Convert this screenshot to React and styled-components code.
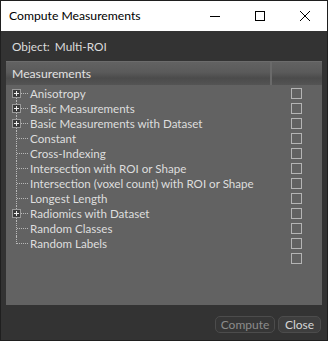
import React from 'react';
import styled, { createGlobalStyle } from 'styled-components';

const GlobalStyle = createGlobalStyle`
  html, body {
    margin: 0;
    padding: 0;
    background: #333333;
  }
  #root {
    width: 328px;
    height: 341px;
  }
`;

const Window = styled.div`
  box-sizing: border-box;
  width: 328px;
  height: 341px;
  border: 1px solid #1f1f1f;
  border-top: none;
  background: #333333;
  display: flex;
  flex-direction: column;
  font-family: Lato, "Open Sans", sans-serif;
`;

const TitleBar = styled.div`
  height: 31px;
  flex: none;
  background: #ffffff;
  display: flex;
  align-items: center;
  border-top: 1px solid #1f1f1f;
  box-sizing: border-box;
`;

const Title = styled.div`
  flex: 1;
  padding-left: 8px;
  font-size: 12.2px;
  color: #000;
  margin-top: -1px;
`;

const Control = styled.div`
  width: 45px;
  height: 30px;
  display: flex;
  align-items: center;
  justify-content: center;
`;

const Body = styled.div`
  flex: 1;
  display: flex;
  flex-direction: column;
  padding: 0 5px 0 5px;
`;

const ObjectRow = styled.div`
  height: 30px;
  display: flex;
  align-items: center;
  gap: 5px;
  padding-left: 6px;
  font-size: 11.8px;
  color: #dcdcdc;
`;

const Panel = styled.div`
  height: 244px;
  background: #626262;
  display: flex;
  flex-direction: column;
`;

const Header = styled.div`
  height: 24px;
  display: flex;
  flex: none;
  background: linear-gradient(#626262 0%, #5a5a5a 45%, #4b4b4b 70%, #545454 100%);
  border-top: 1px solid #6c6c6c;
  box-sizing: border-box;
`;

const HeaderCell = styled.div`
  display: flex;
  align-items: center;
  font-size: 12.2px;
  color: #e2e2e2;
  box-sizing: border-box;
  ${p => p.$grow ? 'flex: 1; padding-left: 6px;' : 'width: 52px; flex: none;'}
  ${p => p.$divider ? 'border-left: 2px solid #6a6a6a;' : ''}
`;

const Rows = styled.div`
  padding-top: 1px;
  display: flex;
  flex-direction: column;
`;

const Row = styled.div`
  height: 15px;
  display: flex;
  align-items: center;
`;

const NameCell = styled.div`
  flex: 1;
  min-width: 0;
  display: flex;
  align-items: center;
  height: 100%;
  font-size: 11.6px;
  line-height: 14px;
  color: #dedede;
  white-space: nowrap;
`;

const Connector = styled.div`
  position: relative;
  width: 24px;
  height: 100%;
  flex: none;

  &::before {
    content: '';
    position: absolute;
    left: 10px;
    top: ${p => (p.$first ? '8px' : '0')};
    bottom: ${p => (p.$last ? '7px' : '0')};
    border-left: 1px dotted #b8b8b8;
  }

  &::after {
    content: '';
    position: absolute;
    left: 11px;
    width: 11px;
    top: 7px;
    border-top: 1px dotted #b8b8b8;
  }
`;

const Expander = styled.div`
  position: absolute;
  left: 6px;
  top: 3px;
  width: 9px;
  height: 9px;
  box-sizing: border-box;
  border: 1px solid #9a9a9a;
  background: #3a3a3a;
  z-index: 1;

  &::before {
    content: '';
    position: absolute;
    left: 1px;
    top: 3px;
    width: 5px;
    height: 1px;
    background: #f0f0f0;
  }

  &::after {
    content: '';
    position: absolute;
    left: 3px;
    top: 1px;
    width: 1px;
    height: 5px;
    background: #f0f0f0;
  }
`;

const CheckCell = styled.div`
  width: 52px;
  flex: none;
  display: flex;
  justify-content: center;
  padding-left: 1px;
  box-sizing: border-box;
`;

const Check = styled.div`
  width: 11px;
  height: 11px;
  box-sizing: border-box;
  border: 1px solid #b4b4b4;
`;

const Footer = styled.div`
  flex: 1;
  display: flex;
  justify-content: flex-end;
  align-items: flex-start;
  gap: 3px;
  padding-top: 11px;
  padding-right: 1px;
`;

const Button = styled.button`
  height: 17px;
  padding: 0;
  width: ${p => p.$w}px;
  border: 1px solid #4c4c4c;
  border-radius: 5px;
  background: ${p => (p.$disabled ? '#363636' : '#3e3e3e')};
  color: ${p => (p.$disabled ? '#8c8c8c' : '#d6d6d6')};
  font-family: Lato, "Open Sans", sans-serif;
  font-size: 12px;
  line-height: 15px;
`;

const items = [
  { name: 'Anisotropy', exp: true },
  { name: 'Basic Measurements', exp: true },
  { name: 'Basic Measurements with Dataset', exp: true },
  { name: 'Constant' },
  { name: 'Cross-Indexing' },
  { name: 'Intersection with ROI or Shape' },
  { name: 'Intersection (voxel count) with ROI or Shape' },
  { name: 'Longest Length' },
  { name: 'Radiomics with Dataset', exp: true },
  { name: 'Random Classes' },
  { name: 'Random Labels' },
];

export default function App() {
  return (
    <>
      <GlobalStyle />
      <Window>
        <TitleBar>
          <Title>Compute Measurements</Title>
          <Control>
            <svg width="10" height="10" viewBox="0 0 10 10">
              <path d="M0 5.5h10" stroke="#000" strokeWidth="1" />
            </svg>
          </Control>
          <Control>
            <svg width="10" height="10" viewBox="0 0 10 10">
              <rect x="0.5" y="0.5" width="9" height="9" fill="none" stroke="#000" strokeWidth="1" />
            </svg>
          </Control>
          <Control>
            <svg width="10" height="10" viewBox="0 0 10 10">
              <path d="M0 0L10 10M10 0L0 10" stroke="#000" strokeWidth="1" />
            </svg>
          </Control>
        </TitleBar>
        <Body>
          <ObjectRow>
            <span>Object:</span>
            <span>Multi-ROI</span>
          </ObjectRow>
          <Panel>
            <Header>
              <HeaderCell $grow>Measurements</HeaderCell>
              <HeaderCell $divider />
            </Header>
            <Rows>
              {items.map((it, i) => (
                <Row key={it.name}>
                  <NameCell>
                    <Connector $first={i === 0} $last={i === items.length - 1}>
                      {it.exp && <Expander />}
                    </Connector>
                    {it.name}
                  </NameCell>
                  <CheckCell><Check /></CheckCell>
                </Row>
              ))}
              <Row>
                <NameCell />
                <CheckCell><Check /></CheckCell>
              </Row>
            </Rows>
          </Panel>
          <Footer>
            <Button $w={60} $disabled>Compute</Button>
            <Button $w={43}>Close</Button>
          </Footer>
        </Body>
      </Window>
    </>
  );
}
